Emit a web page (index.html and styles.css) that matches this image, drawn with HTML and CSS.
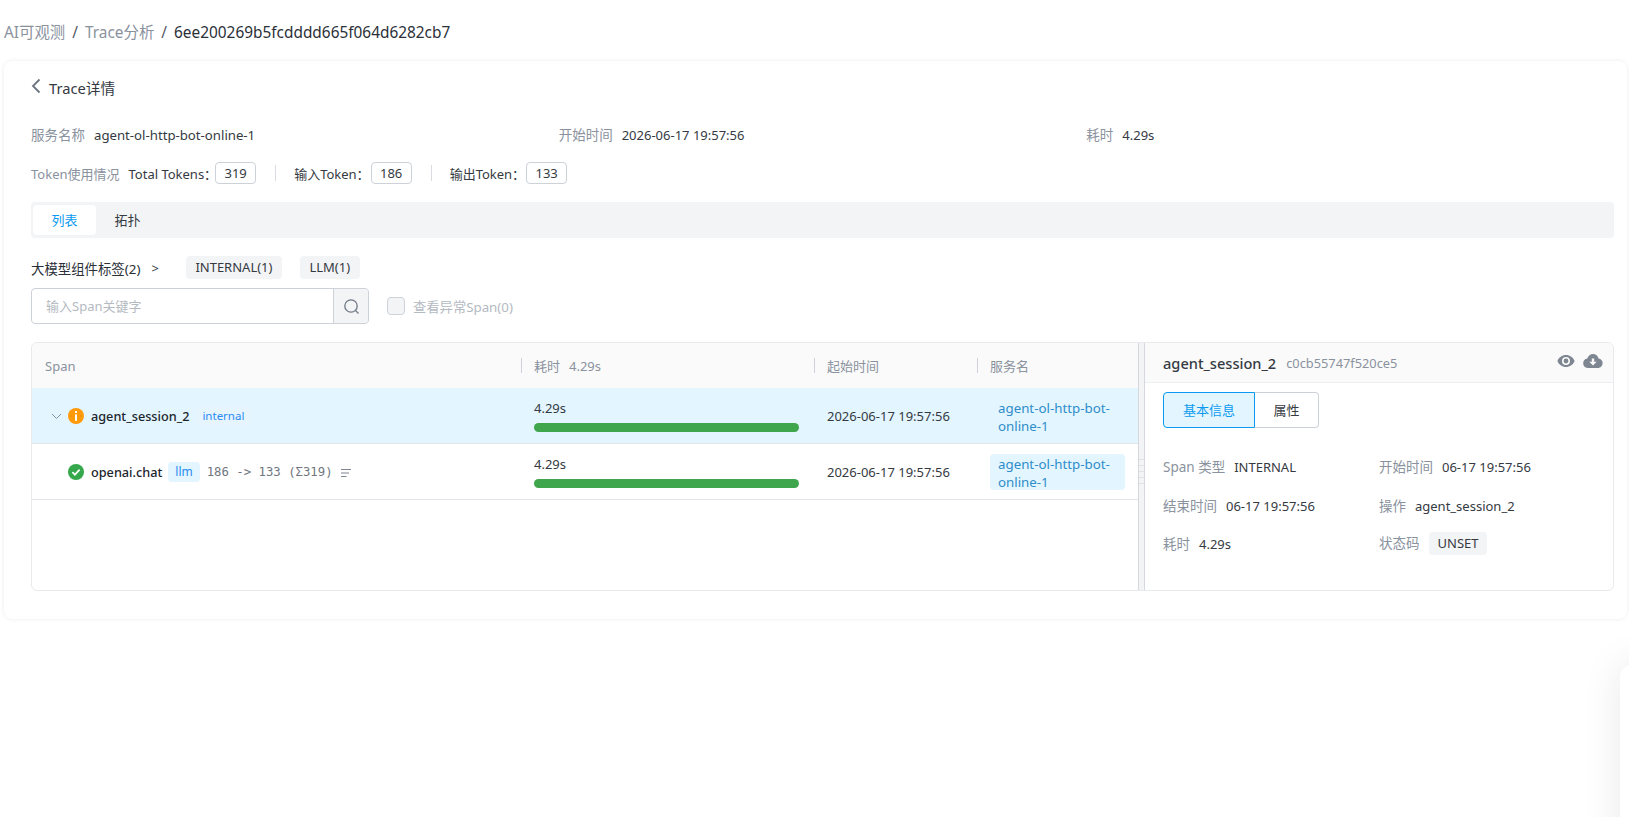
FILE: index.html
```html
<!DOCTYPE html>
<html lang="zh-CN">
<head>
  <meta charset="UTF-8">
  <title>Trace详情</title>
  <link rel="stylesheet" href="styles.css">
</head>
<body>
  <nav class="crumbs">
    <span class="crumb">AI可观测</span><span class="crumb-sep">/</span><span class="crumb">Trace分析</span><span class="crumb-sep">/</span><span class="crumb-current">6ee200269b5fcdddd665f064d6282cb7</span>
  </nav>

  <main class="card">
    <div class="title-row">
      <svg class="back" width="10" height="16" viewBox="0 0 10 16"><path d="M8.500 1.500 2 8l6.500 6.500" fill="none" stroke="#6b7480" stroke-width="1.8"/></svg>
      <span>Trace详情</span>
    </div>

    <div class="meta">
      <div><span class="label">服务名称</span><span class="value-name">agent-ol-http-bot-online-1</span></div>
      <div><span class="label">开始时间</span><span>2026-06-17 19:57:56</span></div>
      <div><span class="label">耗时</span><span>4.29s</span></div>
    </div>

    <div class="tokens">
      <span class="label">Token使用情况</span>
      <span class="tok-name tok-total">Total Tokens：</span><span class="tok-box">319</span>
      <i class="tok-sep"></i>
      <span class="tok-name">输入Token：</span><span class="tok-box">186</span>
      <i class="tok-sep"></i>
      <span class="tok-name">输出Token：</span><span class="tok-box">133</span>
    </div>

    <div class="tabs">
      <span class="tab active">列表</span>
      <span class="tab">拓扑</span>
    </div>

    <div class="filters">
      <span class="filter-title">大模型组件标签(2)</span>
      <span class="filter-arrow">&gt;</span>
      <span class="chip">INTERNAL(1)</span>
      <span class="chip">LLM(1)</span>
    </div>

    <div class="search-row">
      <div class="search">
        <span class="search-input">输入Span关键字</span>
        <span class="search-btn">
          <svg width="17" height="17" viewBox="0 0 17 17"><circle cx="8" cy="8" r="6.200" fill="none" stroke="#6f7884" stroke-width="1.300"/><path d="m12.500 12.500 3 3" stroke="#6f7884" stroke-width="1.300"/></svg>
        </span>
      </div>
      <span class="checkbox"></span>
      <span class="check-text">查看异常Span(0)</span>
    </div>

    <section class="split">
      <div class="list">
        <div class="row head">
          <div class="cell cell-span">Span</div>
          <div class="cell"><i class="bar-sep"></i>耗时<span class="head-sub">4.29s</span></div>
          <div class="cell"><i class="bar-sep"></i>起始时间</div>
          <div class="cell"><i class="bar-sep"></i>服务名</div>
        </div>

        <div class="row item selected">
          <div class="cell cell-span">
            <svg class="fold" width="11" height="7" viewBox="0 0 11 7"><path d="m1 1 4.500 4.500L10 1" fill="none" stroke="#8a929e" stroke-width="1"/></svg>
            <svg class="status" width="16" height="16" viewBox="0 0 16 16"><circle cx="8" cy="8" r="8" fill="#ff9a0a"/><rect x="7" y="3" width="2" height="2" fill="#fff"/><rect x="7" y="6.400" width="2" height="6.400" fill="#fff"/></svg>
            <span class="span-name">agent_session_2</span>
            <span class="kind kind-plain">internal</span>
          </div>
          <div class="cell cell-time">
            <span>4.29s</span>
            <div class="bar"></div>
          </div>
          <div class="cell">2026-06-17 19:57:56</div>
          <div class="cell"><span class="service">agent-ol-http-bot-online-1</span></div>
        </div>

        <div class="row item">
          <div class="cell cell-span">
            <span class="fold-gap"></span>
            <svg class="status" width="16" height="16" viewBox="0 0 16 16"><circle cx="8" cy="8" r="8" fill="#34a84a"/><path d="m4.400 8.200 2.500 2.500 4.700-5" fill="none" stroke="#fff" stroke-width="1.700"/></svg>
            <span class="span-name">openai.chat</span>
            <span class="kind">llm</span>
            <span class="usage">186 -&gt; 133 (Σ319)</span>
            <svg class="usage-icon" width="11" height="10" viewBox="0 0 11 10"><path d="M0 1.500h10M0 5h8M0 8.500h5.500" stroke="#7e8691" stroke-width="1.200"/></svg>
          </div>
          <div class="cell cell-time">
            <span>4.29s</span>
            <div class="bar"></div>
          </div>
          <div class="cell">2026-06-17 19:57:56</div>
          <div class="cell"><span class="service service-on">agent-ol-http-bot-online-1</span></div>
        </div>
      </div>

      <div class="resizer"><i class="grip"></i></div>

      <aside class="detail">
        <header class="detail-head">
          <span class="detail-name">agent_session_2</span>
          <span class="detail-id">c0cb55747f520ce5</span>
          <span class="detail-tools">
            <svg width="18" height="12" viewBox="0 0 18 12"><path fill-rule="evenodd" d="M9 0c3.900 0 7.200 2.500 8.600 6-1.400 3.500-4.700 6-8.600 6S1.800 9.500.4 6C1.800 2.500 5.100 0 9 0Zm0 2a4 4 0 1 0 0 8 4 4 0 0 0 0-8Zm0 1.600a2.400 2.400 0 1 1 0 4.800 2.400 2.400 0 0 1 0-4.800Z" fill="#7e8691"/></svg>
            <svg width="20" height="14" viewBox="0 0 20 14"><path fill-rule="evenodd" d="M10 0c2.700 0 5 1.900 5.600 4.500C17.900 4.700 19.600 6.600 19.600 9c0 2.700-2.100 5-4.700 5H4.700C2.100 14 .2 11.900.2 9.300.2 6.900 1.900 5 4.200 4.600 5.200 2 7.400 0 10 0ZM8.800 4.500v3.300H6.300L10 11.600l3.700-3.800h-2.500V4.500Z" fill="#7e8691"/></svg>
          </span>
        </header>
        <div class="seg">
          <span class="seg-item on">基本信息</span>
          <span class="seg-item">属性</span>
        </div>
        <div class="info">
          <div><span class="label">Span 类型</span><span>INTERNAL</span></div>
          <div><span class="label">开始时间</span><span>06-17 19:57:56</span></div>
          <div><span class="label">结束时间</span><span>06-17 19:57:56</span></div>
          <div><span class="label">操作</span><span>agent_session_2</span></div>
          <div><span class="label">耗时</span><span>4.29s</span></div>
          <div><span class="label">状态码</span><span class="chip chip-code">UNSET</span></div>
        </div>
      </aside>
    </section>
  </main>

  <div class="float-panel"></div>
</body>
</html>
```

FILE: styles.css
```css
* {
  box-sizing: border-box;
}

body {
  margin: 0;
  height: 817px;
  overflow: hidden;
  background: #fff;
  color: #353a42;
  font-family: "Noto Sans", "Noto Sans CJK SC", sans-serif;
  font-size: 13px;
}

.label {
  color: #8a929e;
  font-size: 13.5px;
  margin-right: 9px;
}

.value-name {
  font-size: 13.2px;
}

/* breadcrumb */
.crumbs {
  height: 61px;
  padding: 21px 0 0 4px;
  font-size: 15.4px;
  line-height: 24px;
}

.crumb {
  color: #8a929e;
}

.crumb-sep {
  margin: 0 7px;
  color: #555c66;
}

.crumb-current {
  color: #2b3038;
}

/* main card */
.card {
  margin: 0 2px 0 4px;
  height: 558px;
  padding: 0 13px 0 27px;
  border-radius: 8px;
  box-shadow: 0 0 4px rgba(0, 0, 0, 0.08);
}

.title-row {
  display: flex;
  align-items: center;
  height: 50px;
  padding-top: 3px;
  font-size: 14.7px;
}

.back {
  margin-right: 8px;
  margin-top: -3px;
}

.meta {
  display: grid;
  grid-template-columns: repeat(3, 1fr);
  margin-top: 12px;
  line-height: 24px;
}

.tokens {
  display: flex;
  align-items: center;
  height: 22px;
  margin-top: 15px;
}

.tokens .label {
  font-size: 13px;
  margin-right: 9px;
}

.tok-name {
  margin-right: 1px;
}

.tok-total {
  margin-right: -2px;
}

.tok-box {
  width: 41px;
  height: 22px;
  line-height: 20px;
  text-align: center;
  border: 1px solid #cdd2d9;
  border-radius: 4px;
}

.tok-sep {
  width: 1px;
  height: 16px;
  margin: 0 18px 0 19px;
  background: #d9dce1;
}

.tabs {
  display: flex;
  height: 36px;
  margin-top: 18px;
  padding: 3px 2px;
  background: #f3f4f6;
  border-radius: 4px;
}

.tab {
  width: 63px;
  line-height: 31px;
  text-align: center;
  border-radius: 4px;
}

.tab.active {
  background: #fff;
  color: #0a9bf0;
}

.filters {
  display: flex;
  align-items: center;
  height: 23px;
  margin-top: 18px;
}

.filter-title {
  color: #2b3038;
  font-size: 13.4px;
}

.filter-arrow {
  margin: 0 27px 0 11px;
}

.chip {
  display: inline-block;
  height: 23px;
  padding: 0 9.5px;
  line-height: 23px;
  background: #f3f4f6;
  border-radius: 4px;
  margin-right: 18px;
}

.search-row {
  display: flex;
  align-items: center;
  height: 36px;
  margin-top: 9px;
}

.search {
  display: flex;
  width: 338px;
  height: 36px;
  border: 1px solid #cdd2d9;
  border-radius: 4px;
}

.search-input {
  flex: 1;
  padding-left: 14px;
  line-height: 34px;
  color: #b4bac2;
}

.search-btn {
  display: flex;
  align-items: center;
  justify-content: center;
  width: 35px;
  background: #f3f4f6;
  border-left: 1px solid #cdd2d9;
  border-radius: 0 4px 4px 0;
}

.checkbox {
  width: 18px;
  height: 18px;
  margin: 0 8px 0 18px;
  background: #f3f4f6;
  border: 1px solid #cdd2d9;
  border-radius: 4px;
}

.check-text {
  color: #b4bac2;
  font-size: 13.3px;
}

/* span table + detail */
.split {
  display: flex;
  height: 249px;
  margin-top: 18px;
  border: 1px solid #e8eaed;
  border-radius: 6px;
}

.list {
  width: 1106px;
}

.row {
  display: grid;
  grid-template-columns: 490px 293px 163px 1fr;
}

.cell {
  display: flex;
  align-items: center;
  position: relative;
  padding-left: 12px;
}

.cell-span {
  padding-left: 13px;
}

.head {
  height: 45px;
  background: #fafafa;
  color: #8a929e;
  border-radius: 6px 0 0 0;
}

.bar-sep {
  width: 1px;
  height: 15px;
  background: #cfd3d9;
  position: absolute;
  left: -1px;
  top: 15px;
}

.head-sub {
  margin-left: 9px;
}

.item {
  height: 56px;
  border-bottom: 1px solid #e2e5e9;
}

.selected {
  background: #e3f5ff;
}

.fold {
  margin: 2px 6px 0 6px;
}

.fold-gap {
  width: 23px;
}

.status {
  margin-right: 7px;
}

.span-name {
  color: #20252c;
  font-size: 12.7px;
  font-weight: 500;
}

.kind {
  height: 20px;
  margin-left: 6px;
  padding: 0 7px;
  line-height: 20px;
  color: #2b8cf0;
  font-size: 12px;
  background: #e3f5ff;
  border-radius: 4px;
}

.kind-plain {
  font-size: 11.5px;
  background: #e6f4fe;
}

.usage {
  margin-left: 7px;
  color: #6f7680;
  font-family: "DejaVu Sans Mono", monospace;
  font-size: 12.3px;
}

.usage-icon {
  margin-left: 8px;
  margin-top: 2px;
}

.cell-time {
  display: block;
  padding-top: 10px;
  line-height: 20px;
}

.bar {
  width: 265px;
  height: 9px;
  margin-top: 5px;
  background: #40a64e;
  border-radius: 5px;
}

.service {
  width: 135px;
  height: 36px;
  padding: 1px 8px 0;
  font-size: 13.3px;
  line-height: 18px;
  color: #2f8dc9;
  border-radius: 4px;
}

.service-on {
  background: #e3f5ff;
}

.resizer {
  width: 7px;
  display: flex;
  align-items: center;
  background: #f3f4f6;
  border-left: 1px solid #d5d9de;
  border-right: 1px solid #d5d9de;
}

.grip {
  display: block;
  width: 100%;
  height: 29px;
  margin-top: 13px;
  background: repeating-linear-gradient(#dfe2e6 0 1px, transparent 1px 6px);
}

.detail {
  flex: 1;
}

.detail-head {
  display: flex;
  align-items: center;
  height: 40px;
  padding: 0 10px 0 18px;
  background: #fafafa;
  border-bottom: 1px solid #eceef1;
  border-radius: 0 6px 0 0;
}

.detail-name {
  font-size: 14.6px;
  font-weight: 500;
  margin-right: 10px;
}

.detail-id {
  color: #8a929e;
  font-size: 12.8px;
}

.detail-tools {
  display: flex;
  align-items: center;
  gap: 8px;
  margin-left: auto;
  margin-top: -3px;
}

.seg {
  display: flex;
  margin: 9px 0 0 18px;
  width: 156px;
  height: 36px;
  line-height: 34px;
}

.seg-item {
  text-align: center;
  border: 1px solid #cdd2d9;
  border-left: 0;
  border-radius: 0 4px 4px 0;
  flex: 1;
}

.seg-item.on {
  flex: 0 0 92px;
  color: #0a9bf0;
  background: #e3f5ff;
  border: 1px solid #0a9bf0;
  border-radius: 4px 0 0 4px;
}

.info {
  display: grid;
  grid-template-columns: 216px 1fr;
  margin: 19px 0 0 18px;
  grid-auto-rows: 38.5px;
  align-items: center;
}

.chip-code {
  padding: 0 9px;
  margin: 0;
}

/* half hidden widget at the bottom right */
.float-panel {
  position: fixed;
  left: 1620px;
  top: 664px;
  width: 60px;
  height: 200px;
  background: #fff;
  border-radius: 14px;
  box-shadow: 0 0 40px rgba(0, 0, 0, 0.09);
}
```
